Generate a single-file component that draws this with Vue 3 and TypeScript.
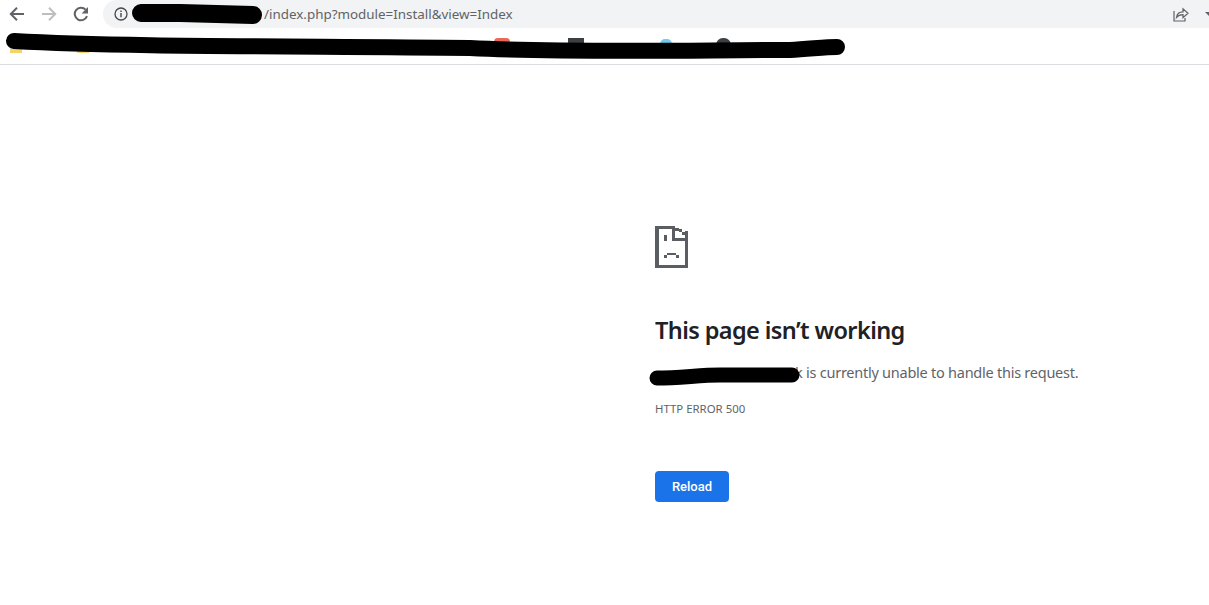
<script setup lang="ts">
const iconRects: [number, number, number, number][] = [
  [0, 0, 20, 3], [0, 0, 4, 42], [0, 39, 33, 3], [30, 5, 3, 37],
  [17, 0, 3, 15], [17, 12, 16, 3], [20, 2, 4, 3], [24, 3, 3, 3], [27, 6, 3, 3],
  [9, 9, 3, 6], [12, 27, 9, 2], [9, 29, 3, 3], [21, 29, 3, 3]
];
</script>

<template>
  <div class="window">
    <header class="toolbar">
      <nav class="nav-icons">
        <svg class="nav" viewBox="0 0 16 16" width="16" height="16"><path d="M15 8H2M8 1.800 1.800 8 8 14.200" fill="none" stroke="#5f6368" stroke-width="2" /></svg>
        <svg class="nav" viewBox="0 0 16 16" width="16" height="16"><path d="M1 8h13M8 1.800 14.200 8 8 14.200" fill="none" stroke="#bcbec1" stroke-width="2" /></svg>
        <svg class="nav" viewBox="0 0 16 16" width="16" height="16"><path d="M14 10.200A6.300 6.300 0 1 1 12.600 3.600" fill="none" stroke="#5f6368" stroke-width="2" /><path d="M15 1v6.400H8.600z" fill="#5f6368" /></svg>
      </nav>
      <div class="omnibox">
        <svg class="info" viewBox="0 0 14 14" width="14" height="14"><circle cx="7" cy="7" r="6" fill="none" stroke="#45484c" stroke-width="1.300" /><path d="M6.300 6h1.400v4.200H6.300zM6.300 3.500h1.400v1.400H6.300z" fill="#45484c" /></svg>
        <span class="url">/index.php?module=Install&amp;view=Index</span>
        <svg class="share" viewBox="0 0 16 16" width="16" height="16"><path d="M1 5v10h11v-3M3.500 11.500c.5-4 3-5.700 6.500-5.700V2.800l5 4.400-5 4.400V8.600c-2.800 0-4.800.7-6.500 2.900z" fill="none" stroke="#5f6368" stroke-width="1.200" /></svg>
        <span class="tail"></span>
      </div>
    </header>

    <div class="bookmarks">
      <span class="bm folder one"></span>
      <span class="bm folder two"></span>
      <span class="bm heart"></span>
      <span class="bm square"></span>
      <span class="bm cyan"></span>
      <span class="bm circle"></span>
    </div>

    <main class="page">
      <svg class="sad" viewBox="0 0 33 42" width="33" height="42" shape-rendering="crispEdges">
        <rect v-for="(r, i) in iconRects" :key="i" :x="r[0]" :y="r[1]" :width="r[2]" :height="r[3]" fill="#5a5d61" />
      </svg>
      <h1>This page isn’t working</h1>
      <p class="msg"><span class="host">k</span> is currently unable to handle this request.</p>
      <div class="code">HTTP ERROR 500</div>
      <button class="reload" type="button">Reload</button>
    </main>

    <svg class="scribble" viewBox="0 0 1209 605" width="1209" height="605">
      <path d="M141 13L180 13 253 15" stroke="#000" stroke-width="18" stroke-linecap="round" fill="none" />
      <path d="M14 41C120 47 300 46 470 48 560 53 700 50 790 50 810 49 825 47 837 47" stroke="#000" stroke-width="16" stroke-linecap="round" fill="none" />
      <path d="M657 378C680 378 700 375 720 375L792 375" stroke="#000" stroke-width="15" stroke-linecap="round" fill="none" />
    </svg>
  </div>
</template>

<style>
html, body { margin: 0; background: #fff; }
</style>

<style scoped>
.window {
  position: relative;
  width: 1209px;
  height: 605px;
  overflow: hidden;
  background: #fff;
  font-family: "Noto Sans", "Open Sans", sans-serif;
}
.toolbar {
  display: flex;
  height: 28px;
  padding-left: 9px;
  box-sizing: border-box;
}
.nav-icons {
  display: flex;
  align-items: center;
  gap: 16px;
  width: 94px;
  flex: none;
  margin-top: -1px;
}
.omnibox {
  flex: 1;
  display: flex;
  align-items: center;
  background: #f1f3f4;
  border-radius: 14px 0 0 14px;
  padding-left: 11px;
}
.info { flex: none; margin-top: -1px; }
.url {
  margin-left: 136px;
  font-size: 13.400px;
  color: #5f6368;
  white-space: nowrap;
}
.share { margin-left: auto; }
.tail {
  width: 0;
  height: 0;
  margin-left: 16px;
  border-left: 4px solid transparent;
  border-top: 4px solid #5f6368;
}
.bookmarks {
  position: relative;
  height: 36px;
  border-bottom: 1px solid #dadce0;
}
.bm { position: absolute; }
.folder { top: 21px; width: 12px; height: 4px; background: #f3d36b; }
.one { left: 10px; }
.two { left: 77px; }
.heart { left: 494px; top: 10px; width: 16px; height: 6px; background: #e8695c; border-radius: 4px 4px 0 0; }
.square { left: 568px; top: 10px; width: 16px; height: 6px; background: #3c4043; }
.cyan { left: 660px; top: 11px; width: 12px; height: 5px; background: #6fcbee; border-radius: 6px 6px 0 0; }
.circle { left: 716px; top: 10px; width: 15px; height: 7px; background: #3c4043; border-radius: 8px 8px 0 0; }
.page {
  display: flex;
  flex-direction: column;
  align-items: flex-start;
  padding: 161px 0 0 655px;
}
.sad { display: block; }
h1 {
  margin: 45px 0 0;
  font-size: 23.500px;
  line-height: 34px;
  font-weight: 600;
  letter-spacing: -0.600px;
  color: #202124;
  white-space: nowrap;
}
.msg {
  margin: 13px 0 0;
  padding-left: 140px;
  font-size: 14.500px;
  letter-spacing: -0.250px;
  line-height: 24px;
  color: #5f6368;
  white-space: nowrap;
}
.host { color: #5f6368; }
.code {
  margin-top: 16px;
  font-size: 11.400px;
  line-height: 18px;
  color: #5f6368;
  white-space: nowrap;
}
.reload {
  margin-top: 53px;
  width: 74px;
  height: 31px;
  border: 0;
  border-radius: 4px;
  padding: 0;
  background: #1a73e8;
  color: #fff;
  font: 500 13px Roboto, sans-serif;
}
.scribble {
  position: absolute;
  left: 0;
  top: 0;
  pointer-events: none;
}
</style>
